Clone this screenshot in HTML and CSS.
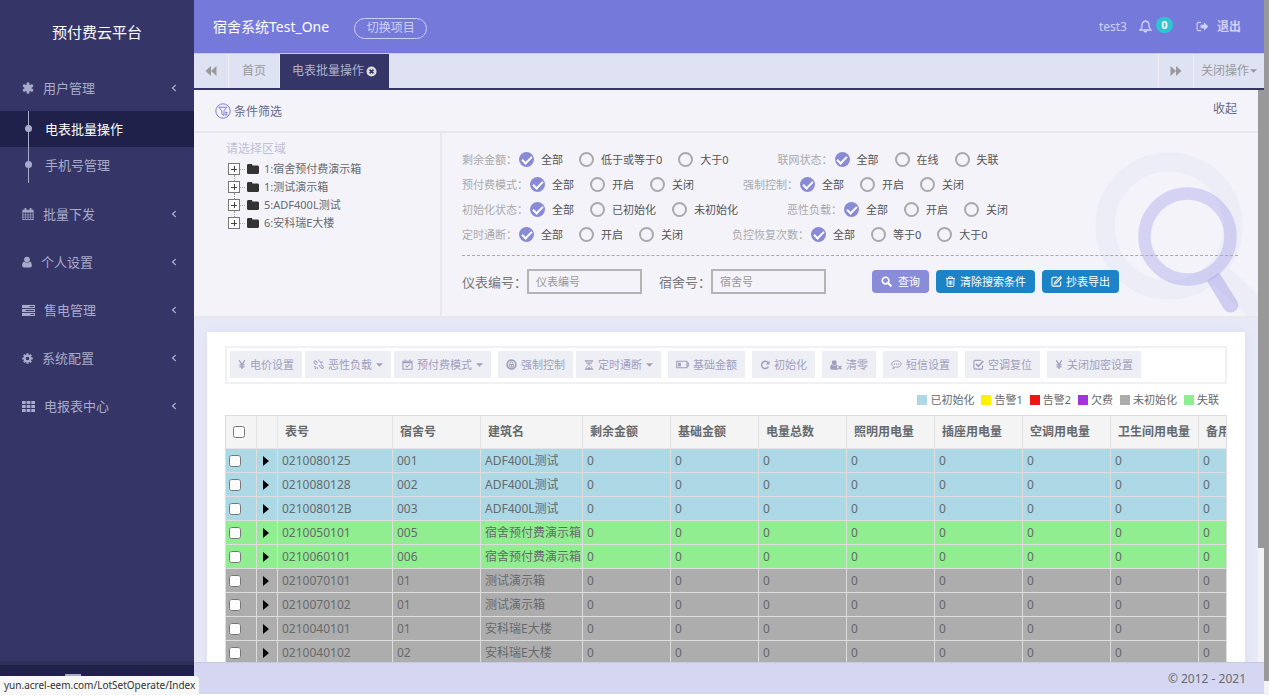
FILE: index.html
```html
<!DOCTYPE html>
<html lang="zh-CN">
<head>
<meta charset="utf-8">
<title>预付费云平台</title>
<link rel="stylesheet" href="styles.css">
</head>
<body>
<svg class="sprite" aria-hidden="true">
  <symbol id="asterisk" viewBox="0 0 14 14"><g stroke="currentColor" stroke-width="3.6" stroke-linecap="round"><path d="M7 2v10M2.700 4.500l8.600 5M11.300 4.500l-8.600 5"/></g></symbol>
  <symbol id="calendar" viewBox="0 0 14 14"><g fill="none" stroke="currentColor"><rect x="1" y="2.500" width="12" height="11"/><path d="M1 4h12" stroke-width="2.400"/><path d="M4 .5v3M10 .5v3" stroke-width="2" stroke-linecap="round"/><path d="M1 8h12M1 10.700h12M4 5v8M7 5v8M10 5v8" stroke-width=".7"/></g></symbol>
  <symbol id="user" viewBox="0 0 12 14"><g fill="currentColor"><circle cx="6" cy="4" r="3.400"/><path d="M2.600 6.500C.8 7 .2 9.500.2 11.300.2 12.800 1.200 13.500 2.300 13.500h7.400c1.100 0 2.100-.7 2.100-2.200 0-1.800-.6-4.300-2.400-4.800A5 5 0 0 1 6 8a5 5 0 0 1-3.400-1.500z"/></g></symbol>
  <symbol id="server" viewBox="0 0 14 12"><g fill="currentColor"><rect y="0" width="14" height="3.300"/><rect y="4.300" width="14" height="3.300"/><rect y="8.600" width="14" height="3.300"/></g><g fill="#353667"><rect x="8" y="1.200" width="5" height="1"/><rect x="4" y="5.500" width="9" height="1"/><rect x="9" y="9.800" width="4" height="1"/></g></symbol>
  <symbol id="cog" viewBox="0 0 14 14"><circle cx="7" cy="7" r="3.600" fill="none" stroke="currentColor" stroke-width="3"/><path d="M7 .4v3M7 10.600v3M.4 7h3M10.600 7h3M2.300 2.300l2 2M9.700 9.700l2 2M11.700 2.300l-2 2M4.300 9.700l-2 2" stroke="currentColor" stroke-width="2.600"/><circle cx="7" cy="7" r="2" fill="#353667"/></symbol>
  <symbol id="grid" viewBox="0 0 14 12"><path fill="currentColor" d="M0 0h4v3.200H0zM5 0h4v3.200H5zM10 0h4v3.200h-4zM0 4.300h4v3.200H0zM5 4.300h4v3.200H5zM10 4.300h4v3.200h-4zM0 8.600h4v3.200H0zM5 8.600h4v3.200H5zM10 8.600h4v3.200h-4z"/></symbol>
  <symbol id="angle" viewBox="0 0 6 8"><path d="M4.700 1 1.500 4l3.200 3" fill="none" stroke="currentColor" stroke-width="1.200"/></symbol>
  <symbol id="rewind" viewBox="0 0 12 10"><path fill="currentColor" d="M6 0v10L.5 5zM11.500 0v10L6 5z"/></symbol>
  <symbol id="forward" viewBox="0 0 12 10"><path fill="currentColor" d="M.5 0v10L6 5zM6 0v10l5.500-5z"/></symbol>
  <symbol id="close" viewBox="0 0 12 12"><circle cx="6" cy="6" r="5.500" fill="#dcdcdc"/><path d="m3.900 3.900 4.200 4.200m0-4.200L3.900 8.100" stroke="#353667" stroke-width="1.800"/></symbol>
  <symbol id="bell" viewBox="0 0 14 14"><path d="M7 1.300c-2.400 0-3.700 1.800-3.700 4 0 3-.9 4.400-2.100 5.500h11.600c-1.200-1.100-2.100-2.500-2.100-5.500 0-2.200-1.300-4-3.700-4zM5.500 11.400a1.500 1.500 0 0 0 3 0M7 0v1.500" fill="none" stroke="currentColor" stroke-width="1.500"/></symbol>
  <symbol id="exit" viewBox="0 0 14 12"><path d="M5.500 1.500H3A1.800 1.800 0 0 0 1.200 3.300v5.400A1.800 1.800 0 0 0 3 10.500h2.500" fill="none" stroke="currentColor" stroke-width="1.300"/><path fill="currentColor" d="M5 4.200h3.500V1.500L13.300 6l-4.800 4.500V7.800H5z"/></symbol>
  <symbol id="filter" viewBox="0 0 16 16"><g fill="none" stroke="currentColor"><circle cx="8" cy="8" r="7.200"/><path d="M3.800 4.200h8L9 7.800M6.800 7.800 3.800 4.200M6.800 7.800V11L9 12.500V7.800"/><path d="M11 8.500v4M10.500 9.500h2M10.500 11.800h2"/></g></symbol>
  <symbol id="folder" viewBox="0 0 12 10"><path fill="#333" d="M0 1.500C0 .6.500 0 1.400 0h2.800c.8 0 1.200.5 1.200 1.400h5C11.400 1.400 12 2 12 2.900v5.600c0 .9-.6 1.500-1.500 1.500h-9C.6 10 0 9.400 0 8.500z"/></symbol>
  <symbol id="search" viewBox="0 0 12 12"><circle cx="5" cy="5" r="3.600" fill="none" stroke="currentColor" stroke-width="1.800"/><path d="m7.700 7.700 3 3" stroke="currentColor" stroke-width="2.200" stroke-linecap="round"/></symbol>
  <symbol id="trash" viewBox="0 0 12 12"><path d="M1 2.700h10M4 2.500V1h4v1.500M2.300 3v7.200c0 .8.300 1.200 1 1.200h5.400c.7 0 1-.4 1-1.200V3M4.500 5v4.500M6 5v4.500M7.500 5v4.500" fill="none" stroke="currentColor"/></symbol>
  <symbol id="edit" viewBox="0 0 12 12"><path d="M7 1.500H2.500A1.500 1.500 0 0 0 1 3v6.500A1.500 1.500 0 0 0 2.500 11H9a1.500 1.500 0 0 0 1.500-1.500V6M10.200.8l1.200 1.200-5.700 6-2 .7.600-2z" fill="none" stroke="currentColor" stroke-width="1.200"/></symbol>
  <symbol id="yen" viewBox="0 0 8 12"><path d="M1 1.500 4 6l3-4.500M4 6v5M1.200 6.500h5.600M1.200 8.600h5.600" fill="none" stroke="currentColor" stroke-width="1.400"/></symbol>
  <symbol id="unlink" viewBox="0 0 12 12"><path d="M5 4.500 3 2.300C2.300 1.500 1 2 1 3.300c0 .6.300 1 .8 1.400l2 1.800M7.200 2.500l2.200 2.300M6.500 7l2.800 3c.8.800 2.200.2 2-1-.1-.5-.3-.8-.7-1.200L8.500 6M6.500.5v2M10.500 3.200H8.500M1 8.500h2.200M2 11l1.700-1.800M5 9v2" fill="none" stroke="currentColor" stroke-width="1.100"/></symbol>
  <symbol id="check-calendar" viewBox="0 0 12 12"><path d="M1 2.500h10v8.700H1zM1 4h10M3.500.5v2M8.500.5v2M4 7.200l1.500 1.600 3-3" fill="none" stroke="currentColor" stroke-width="1.200"/></symbol>
  <symbol id="control" viewBox="0 0 12 12"><circle cx="6" cy="6" r="4.800" fill="none" stroke="currentColor" stroke-width="1.800"/><path d="M4.500 6V4.500a1.500 1.500 0 0 1 3 0V6M3.800 6h4.400v2.800H3.800z" fill="none" stroke="currentColor"/><path d="M6 6v3" stroke="currentColor"/></symbol>
  <symbol id="hourglass" viewBox="0 0 12 12"><path d="M1 1h10M1 11h10" stroke="currentColor" stroke-width="1.400"/><path d="M2.500 1c0 3 1.500 3.700 2.700 5C4 7.300 2.500 8 2.500 11M9.500 1c0 3-1.500 3.700-2.700 5C8 7.300 9.500 8 9.500 11" fill="none" stroke="currentColor"/><path fill="currentColor" d="M3.500 3h5L6 6zM3 11l3-3 3 3z"/></symbol>
  <symbol id="battery" viewBox="0 0 14 10"><path d="M.8 1.500h11v7h-11zM11.800 3.500h1.500v3h-1.500" fill="none" stroke="currentColor" stroke-width="1.200"/><path fill="currentColor" d="M2.300 3h3v4h-3z"/></symbol>
  <symbol id="refresh" viewBox="0 0 12 12"><path d="M9.600 3.200A4.300 4.300 0 1 0 10 8" fill="none" stroke="currentColor" stroke-width="1.800"/><path fill="currentColor" d="M11.500.8v4.500H7z"/></symbol>
  <symbol id="user-x" viewBox="0 0 14 12"><g fill="currentColor"><circle cx="5" cy="3.300" r="2.900"/><path d="M2 5.500C.6 6 .2 8 .2 9.500c0 1.200.8 1.900 1.800 1.900h7V9.800L7.800 8.300 9 6.900C8.700 6.200 8.400 5.700 8 5.500 6.300 7.200 3.700 7.200 2 5.500z"/></g><path d="m9.700 7 3.600 3.900m0-3.900-3.600 3.900" stroke="currentColor" stroke-width="1.500"/></symbol>
  <symbol id="message" viewBox="0 0 12 12"><path d="M6 2C3 2 .8 3.600.8 5.500c0 1.200.8 2.200 2 2.800L2 10.700l2.900-1.800c3.400.4 6.300-1.200 6.300-3.400C11.200 3.600 9 2 6 2z" fill="none" stroke="currentColor"/><path d="M3 5h1.300v1.300H3zM5.400 5h1.300v1.300H5.400zM7.800 5h1.300v1.300H7.800z" fill="currentColor"/></symbol>
  <symbol id="check-box" viewBox="0 0 12 12"><path d="M9 1.500H2.500C1.600 1.500 1 2.100 1 3v6.500c0 .9.600 1.500 1.500 1.500H9c.9 0 1.500-.6 1.500-1.500V7" fill="none" stroke="currentColor" stroke-width="1.200"/><path d="m3.300 5.300 2.500 2.600 5.400-5.600" fill="none" stroke="currentColor" stroke-width="1.800"/></symbol>
  <symbol id="caret" viewBox="0 0 8 4"><path fill="currentColor" d="M0 0h8L4 4z"/></symbol>
  <symbol id="play" viewBox="0 0 6 10"><path d="M0 0v10l6-5z"/></symbol>
</svg>
<div class="app">
  <aside class="sidebar">
    <h1 class="brand">预付费云平台</h1>
    <nav class="menu">
      <a class="menu-item" href="#"><svg class="i12"><use href="#asterisk"/></svg>用户管理<svg class="angle"><use href="#angle"/></svg></a>
      <div class="submenu">
        <a class="sub-item active" href="#">电表批量操作</a>
        <a class="sub-item" href="#">手机号管理</a>
      </div>
      <a class="menu-item" href="#"><svg class="i12"><use href="#calendar"/></svg>批量下发<svg class="angle"><use href="#angle"/></svg></a>
      <a class="menu-item" href="#"><svg class="i10"><use href="#user"/></svg>个人设置<svg class="angle"><use href="#angle"/></svg></a>
      <a class="menu-item" href="#"><svg class="i13"><use href="#server"/></svg>售电管理<svg class="angle"><use href="#angle"/></svg></a>
      <a class="menu-item" href="#"><svg class="i11"><use href="#cog"/></svg>系统配置<svg class="angle"><use href="#angle"/></svg></a>
      <a class="menu-item" href="#"><svg class="i13"><use href="#grid"/></svg>电报表中心<svg class="angle"><use href="#angle"/></svg></a>
    </nav>
    <div class="side-foot"><svg viewBox="0 0 16 12"><rect x="1" y="1" width="14" height="10" fill="none" stroke="currentColor" stroke-width="2"/></svg></div>
  </aside>
  <div class="main">
    <header class="topbar">
      <span class="project">宿舍系统Test_One</span>
      <button class="switch">切换项目</button>
      <a class="account" href="#">test3</a>
      <a class="notice" href="#"><svg class="i13"><use href="#bell"/></svg><span class="badge">0</span></a>
      <a class="logout" href="#"><svg class="i13"><use href="#exit"/></svg>退出</a>
    </header>
    <div class="tabs">
      <button class="tab narrow" aria-label="向左"><svg class="i12"><use href="#rewind"/></svg></button>
      <button class="tab">首页</button>
      <button class="tab current">电表批量操作<svg class="i11"><use href="#close"/></svg></button>
      <button class="tab narrow right" aria-label="向右"><svg class="i12"><use href="#forward"/></svg></button>
      <button class="tab ops">关闭操作<svg class="caret"><use href="#caret"/></svg></button>
    </div>
    <div class="frame">
      <div class="content">
        <section class="filter">
          <div class="filter-head"><svg class="i16"><use href="#filter"/></svg><span class="filter-title">条件筛选</span><button class="fold">收起</button></div>
          <div class="filter-body">
            <svg class="art" viewBox="1090 150 168 166" fill="none" aria-hidden="true"><g stroke="#ededf8"><circle cx="1169" cy="226" r="64" stroke-width="19"/><path d="m1215 270 60 56" stroke-width="23"/></g><g stroke="#9a9ae8" stroke-opacity=".36"><circle cx="1187.500" cy="236.500" r="43" stroke-width="12.500"/></g><path d="m1207 281 11-8c2 1 2 1 2 1l17 27c5 9-7 16-13 8z" fill="#9a9ae8" fill-opacity=".42"/></svg>
            <div class="area">
              <p class="area-title">请选择区域</p>
              <ul class="tree">
                <li><button class="plus" aria-label="展开"></button><svg><use href="#folder"/></svg>1:宿舍预付费演示箱</li>
                <li><button class="plus" aria-label="展开"></button><svg><use href="#folder"/></svg>1:测试演示箱</li>
                <li><button class="plus" aria-label="展开"></button><svg><use href="#folder"/></svg>5:ADF400L测试</li>
                <li><button class="plus" aria-label="展开"></button><svg><use href="#folder"/></svg>6:安科瑞E大楼</li>
              </ul>
            </div>
            <form class="form">
              <div class="radio-row">
                <div class="group" role="radiogroup"><span class="group-name">剩余金额：</span><label><input type="radio" name="a" checked>全部</label><label><input type="radio" name="a">低于或等于0</label><label><input type="radio" name="a">大于0</label></div>
                <div class="group" role="radiogroup"><span class="group-name">联网状态：</span><label><input type="radio" name="b" checked>全部</label><label><input type="radio" name="b">在线</label><label><input type="radio" name="b">失联</label></div>
              </div>
              <div class="radio-row">
                <div class="group" role="radiogroup"><span class="group-name">预付费模式：</span><label><input type="radio" name="c" checked>全部</label><label><input type="radio" name="c">开启</label><label><input type="radio" name="c">关闭</label></div>
                <div class="group" role="radiogroup"><span class="group-name">强制控制：</span><label><input type="radio" name="d" checked>全部</label><label><input type="radio" name="d">开启</label><label><input type="radio" name="d">关闭</label></div>
              </div>
              <div class="radio-row">
                <div class="group" role="radiogroup"><span class="group-name">初始化状态：</span><label><input type="radio" name="e" checked>全部</label><label><input type="radio" name="e">已初始化</label><label><input type="radio" name="e">未初始化</label></div>
                <div class="group" role="radiogroup"><span class="group-name">恶性负载：</span><label><input type="radio" name="f" checked>全部</label><label><input type="radio" name="f">开启</label><label><input type="radio" name="f">关闭</label></div>
              </div>
              <div class="radio-row">
                <div class="group" role="radiogroup"><span class="group-name">定时通断：</span><label><input type="radio" name="g" checked>全部</label><label><input type="radio" name="g">开启</label><label><input type="radio" name="g">关闭</label></div>
                <div class="group" role="radiogroup"><span class="group-name">负控恢复次数：</span><label><input type="radio" name="h" checked>全部</label><label><input type="radio" name="h">等于0</label><label><input type="radio" name="h">大于0</label></div>
              </div>
              <div class="search-row">
                <label for="meter">仪表编号：</label><input class="text" id="meter" type="text" placeholder="仪表编号">
                <label for="dorm">宿舍号：</label><input class="text" id="dorm" type="text" placeholder="宿舍号">
                <div class="actions">
                  <button type="button" class="btn purple"><svg class="i11"><use href="#search"/></svg>查询</button>
                  <button type="button" class="btn"><svg class="i11"><use href="#trash"/></svg>清除搜索条件</button>
                  <button type="button" class="btn"><svg class="i11"><use href="#edit"/></svg>抄表导出</button>
                </div>
              </div>
            </form>
          </div>
        </section>
        <section class="card">
          <div class="tools">
            <div class="tool-group">
              <button><svg class="i8"><use href="#yen"/></svg>电价设置</button>
              <button><svg class="i11"><use href="#unlink"/></svg>恶性负载<svg class="caret"><use href="#caret"/></svg></button>
              <button><svg class="i11"><use href="#check-calendar"/></svg>预付费模式<svg class="caret"><use href="#caret"/></svg></button>
            </div>
            <div class="tool-group">
              <button><svg class="i11"><use href="#control"/></svg>强制控制</button>
              <button><svg class="i10"><use href="#hourglass"/></svg>定时通断<svg class="caret"><use href="#caret"/></svg></button>
            </div>
            <button><svg class="i13"><use href="#battery"/></svg>基础金额</button>
            <button><svg class="i10"><use href="#refresh"/></svg>初始化</button>
            <button><svg class="i12"><use href="#user-x"/></svg>清零</button>
            <button><svg class="i11"><use href="#message"/></svg>短信设置</button>
            <button><svg class="i11"><use href="#check-box"/></svg>空调复位</button>
            <button><svg class="i8"><use href="#yen"/></svg>关闭加密设置</button>
          </div>
          <ul class="legend">
            <li class="k-init">已初始化</li><li class="k-warn1">告警1</li><li class="k-warn2">告警2</li><li class="k-owe">欠费</li><li class="k-none">未初始化</li><li class="k-lost">失联</li>
          </ul>
          <div class="table-wrap">
            <table>
              <colgroup><col class="c-check"><col class="c-open"><col class="c-no"><col class="c-std"><col class="c-name"><col class="c-std"><col class="c-std"><col class="c-std"><col class="c-std"><col class="c-std"><col class="c-std"><col class="c-std"><col class="c-std"></colgroup>
              <thead><tr><th><input type="checkbox" aria-label="全选"></th><th></th><th>表号</th><th>宿舍号</th><th>建筑名</th><th>剩余金额</th><th>基础金额</th><th>电量总数</th><th>照明用电量</th><th>插座用电量</th><th>空调用电量</th><th>卫生间用电量</th><th>备用</th></tr></thead>
              <tbody>
                <tr class="init"><td><input type="checkbox" aria-label="选择"></td><td><svg class="play"><use href="#play"/></svg></td><td>0210080125</td><td>001</td><td>ADF400L测试</td><td>0</td><td>0</td><td>0</td><td>0</td><td>0</td><td>0</td><td>0</td><td>0</td></tr>
                <tr class="init"><td><input type="checkbox" aria-label="选择"></td><td><svg class="play"><use href="#play"/></svg></td><td>0210080128</td><td>002</td><td>ADF400L测试</td><td>0</td><td>0</td><td>0</td><td>0</td><td>0</td><td>0</td><td>0</td><td>0</td></tr>
                <tr class="init"><td><input type="checkbox" aria-label="选择"></td><td><svg class="play"><use href="#play"/></svg></td><td>021008012B</td><td>003</td><td>ADF400L测试</td><td>0</td><td>0</td><td>0</td><td>0</td><td>0</td><td>0</td><td>0</td><td>0</td></tr>
                <tr class="lost"><td><input type="checkbox" aria-label="选择"></td><td><svg class="play"><use href="#play"/></svg></td><td>0210050101</td><td>005</td><td>宿舍预付费演示箱</td><td>0</td><td>0</td><td>0</td><td>0</td><td>0</td><td>0</td><td>0</td><td>0</td></tr>
                <tr class="lost"><td><input type="checkbox" aria-label="选择"></td><td><svg class="play"><use href="#play"/></svg></td><td>0210060101</td><td>006</td><td>宿舍预付费演示箱</td><td>0</td><td>0</td><td>0</td><td>0</td><td>0</td><td>0</td><td>0</td><td>0</td></tr>
                <tr class="none"><td><input type="checkbox" aria-label="选择"></td><td><svg class="play"><use href="#play"/></svg></td><td>0210070101</td><td>01</td><td>测试演示箱</td><td>0</td><td>0</td><td>0</td><td>0</td><td>0</td><td>0</td><td>0</td><td>0</td></tr>
                <tr class="none"><td><input type="checkbox" aria-label="选择"></td><td><svg class="play"><use href="#play"/></svg></td><td>0210070102</td><td>01</td><td>测试演示箱</td><td>0</td><td>0</td><td>0</td><td>0</td><td>0</td><td>0</td><td>0</td><td>0</td></tr>
                <tr class="none"><td><input type="checkbox" aria-label="选择"></td><td><svg class="play"><use href="#play"/></svg></td><td>0210040101</td><td>01</td><td>安科瑞E大楼</td><td>0</td><td>0</td><td>0</td><td>0</td><td>0</td><td>0</td><td>0</td><td>0</td></tr>
                <tr class="none"><td><input type="checkbox" aria-label="选择"></td><td><svg class="play"><use href="#play"/></svg></td><td>0210040102</td><td>02</td><td>安科瑞E大楼</td><td>0</td><td>0</td><td>0</td><td>0</td><td>0</td><td>0</td><td>0</td><td>0</td></tr>
              </tbody>
            </table>
          </div>
        </section>
      </div>
      <div class="scroll inner"><div class="thumb"></div></div>
    </div>
    <footer class="footer">© 2012 - 2021</footer>
  </div>
  <div class="scroll outer"><div class="thumb"></div></div>
  <div class="status">yun.acrel-eem.com/LotSetOperate/Index</div>
</div>
</body>
</html>
```
FILE: styles.css
```css
* { box-sizing: border-box; }
body { margin: 0; font: 12px/16px "Noto Sans", "Noto Sans CJK SC", sans-serif; color: #676a6c; background: #fff; }
button { font: inherit; color: inherit; border: 0; background: none; padding: 0; margin: 0; cursor: pointer; }
a { color: inherit; text-decoration: none; }
ul { list-style: none; margin: 0; padding: 0; }
svg { flex: none; display: block; }
.sprite { position: absolute; width: 0; height: 0; }
.i8 { width: 8px; height: 11px; }
.i10 { width: 10px; height: 12px; }
.i11 { width: 11px; height: 11px; }
.i12 { width: 12px; height: 12px; }
.i13 { width: 13px; height: 13px; }
.i16 { width: 16px; height: 16px; }
.caret { width: 7px; height: 4px; }

.app { position: relative; display: flex; height: 100vh; overflow: hidden; }

/* sidebar */
.sidebar { flex: none; width: 194px; display: flex; flex-direction: column; background: #353667; color: #a9abca; }
.brand { margin: 0; height: 64px; line-height: 64px; font-size: 15px; font-weight: 400; text-align: center; color: #fff; }
.menu { flex: 1; font-size: 13px; }
.menu-item { display: flex; align-items: center; gap: 9px; height: 48px; padding: 0 17px 0 22px; }
.menu-item:first-child { height: 47px; }
.angle { width: 6px; height: 8px; margin-left: auto; }
.submenu { margin-bottom: 7px; }
.sub-item { position: relative; display: flex; align-items: center; height: 36px; padding-left: 45px; }
.sub-item.active { background: #20214b; color: #fff; }
.sub-item::before { content: ""; position: absolute; left: 28px; top: 0; bottom: 0; width: 1px; background: #a9abca; }
.sub-item::after { content: ""; position: absolute; left: 25px; top: 14px; width: 7px; height: 7px; border-radius: 50%; background: #a9abca; }
.side-foot { height: 34px; padding: 9px 0 0 65px; border-top: 4px solid #2e3056; background: #20204a; }
.side-foot svg { width: 16px; height: 12px; }

/* top bar */
.main { flex: 1; min-width: 0; display: flex; flex-direction: column; }
.topbar { flex: none; display: flex; align-items: center; height: 53px; padding: 0 23px 0 19px; background: #7579da; color: #cfd1f8; }
.project { font-size: 14px; color: #fff; }
.switch { width: 73px; height: 21px; margin: 3px auto 0 25px; border: 1px solid #cfd1f8; border-radius: 11px; line-height: 18px; }
.notice { display: flex; align-items: center; margin: 0 23px 0 12px; }
.badge { margin: 0 0 4px 4px; width: 17px; height: 16px; border-radius: 8px; background: #2fc4d2; color: #fff; font-size: 11px; font-weight: 700; text-align: center; }
.logout { display: flex; align-items: center; gap: 8px; font-weight: 700; }

/* tabs */
.tabs { flex: none; display: flex; height: 37px; background: #dfe2f3; border-top: 1px solid #c9cbee; border-bottom: 2px solid #353667; color: #999; }
.tab { display: flex; align-items: center; justify-content: center; gap: 2px; padding: 0 13px; border-right: 1px solid #eee; }
.narrow { width: 35px; padding: 0; }
.tab.current { padding: 0 12px; background: #353667; color: #b0b2cc; border: 0; }
.right { margin-left: auto; border-left: 1px solid #eee; width: 36px; }
.ops { padding: 0 7px; gap: 1px; border: 0; }

.frame { flex: 1; min-height: 0; display: flex; }
.content { flex: 1; min-width: 0; overflow: hidden; background: #e7eaf6; }

/* filter */
.filter { background: #f4f3fa; border-bottom: 2px solid #e7e7ed; }
.filter-head { display: flex; align-items: center; gap: 3px; height: 43px; padding: 0 21px; border-bottom: 2px solid #e7e7ee; color: #666988; }
.filter-head .i16 { color: #7b7edb; }
.filter-title { margin-top: 3px; }
.fold { margin: 0 0 3px auto; }
.filter-body { position: relative; display: flex; }
.art { position: absolute; right: 0; bottom: 0; width: 168px; height: 166px; }
.area { flex: none; width: 248px; padding: 8px 0 0 32px; border-right: 2px solid #e7e7ee; }
.area-title { margin: 0 0 3px; color: #bfc0d6; }
.tree { font-size: 11px; }
.tree li { position: relative; display: flex; align-items: center; height: 18px; padding-left: 2px; line-height: 18px; }
.tree svg { width: 12px; height: 10px; margin: 0 5px 0 2px; }
.tree li::before { content: ""; position: absolute; left: 14px; top: 9px; width: 5px; border-top: 1px dotted #aaa; }
.tree li:not(:last-child)::after { content: ""; position: absolute; left: 8px; top: 15px; height: 6px; border-left: 1px dotted #999; }
.plus { width: 12px; height: 12px; margin-right: 5px; border: 1px solid #777; background: linear-gradient(#444, #444) center / 6px 1px no-repeat, linear-gradient(#444, #444) center / 1px 6px no-repeat, #fff; }
.form { position: relative; flex: 1; padding: 14px 20px 22px 20px; font-size: 11px; }
.radio-row { display: flex; gap: 49px; height: 25px; align-items: center; }
.group { display: flex; align-items: center; gap: 16px; color: #555; }
.group-name { color: #aaa; margin-right: -14px; }
.group label { display: flex; align-items: center; gap: 7px; }
.group input { appearance: none; width: 15px; height: 15px; margin: 0; border: 2px solid #aaa; border-radius: 50%; }
.group input:checked { border: 0; background: #8a8bd6; display: grid; place-items: center; }
.group input:checked::before { content: ""; width: 8px; height: 4px; margin-bottom: 2px; border: solid #fff; border-width: 0 0 2px 2px; transform: rotate(-45deg); }
.search-row { display: flex; align-items: center; margin-top: 8px; padding-top: 13px; border-top: 1px dashed #aaa; }
.search-row label { font-size: 13px; color: #777; }
.text { width: 115px; height: 25px; margin-right: 17px; padding: 0 7px; border: 2px solid #b4b4b4; background: transparent; font: inherit; color: #555; }
.text::placeholder { color: #999; }
.actions { display: flex; gap: 7px; margin-left: 29px; }
.btn { display: flex; align-items: center; gap: 4px; height: 23px; padding: 0 9px; border-radius: 4px; background: #1c84c6; color: #fff; }
.purple { background: #8b8cd7; gap: 6px; }

/* card */
.card { margin: 14px 13px 0; padding: 14px 18px; background: #fff; box-shadow: 0 0 12px #d9dcf5; }
.tools { display: flex; gap: 7px; padding: 3px 3px 4px; border: 2px solid #f0f0f6; font-size: 11px; color: #a09fbd; }
.tool-group { display: flex; gap: 3px; }
.tools button { display: flex; align-items: center; gap: 4px; height: 27px; padding: 0 8px; background: #eeeef5; white-space: nowrap; }
.legend { display: flex; justify-content: flex-end; gap: 7px; height: 31px; align-items: center; padding-right: 8px; font-size: 11px; }
.legend li { display: flex; align-items: center; gap: 3px; }
.legend li::before { content: ""; width: 10px; height: 10px; background: currentColor; }
.k-init::before { color: #add8e6; }
.k-warn1::before { color: #fff000; }
.k-warn2::before { color: #ee1515; }
.k-owe::before { color: #a333dc; }
.k-none::before { color: #adadad; }
.k-lost::before { color: #90ee90; }
.table-wrap { overflow: hidden; border: solid #ddd; border-width: 1px 1px 0; }
table { width: 1061px; table-layout: fixed; border-collapse: separate; border-spacing: 0; }
.c-check { width: 31px; }
.c-open { width: 21px; }
.c-no { width: 115px; }
.c-name { width: 102px; }
.c-std { width: 88px; }
th { height: 33px; padding: 0 7px; border: solid #e4e4e4; border-width: 0 1px 1px 0; background: #f4f4f4; text-align: left; white-space: nowrap; }
td { height: 24px; padding: 0 4px; border: solid #ddd; border-width: 0 1px 1px 0; white-space: nowrap; }
th input, td input { display: block; width: 12px; height: 12px; margin: 0; }
td input { margin-left: -1px; }
.init { background: #add8e6; }
.lost { background: #90ee90; }
.none { background: #adadad; }
.play { width: 6px; height: 10px; margin-left: 2px; }

.footer { flex: none; height: 32px; margin-bottom: 1px; padding-right: 18px; border-top: 1px solid #c6c8e6; background: #d5d7f2; text-align: right; line-height: 32px; }
.scroll { flex: none; background: #f3f3f3; }
.inner { width: 6px; }
.outer { width: 5px; }
.thumb { background: #999; }
.inner .thumb { height: 80%; }
.outer .thumb { height: 98%; }
.status { position: absolute; left: 0; bottom: 0; height: 19px; padding: 0 4px; border-top-right-radius: 4px; background: #f8f8f8; color: #333; font-size: 10px; line-height: 19px; }
```
